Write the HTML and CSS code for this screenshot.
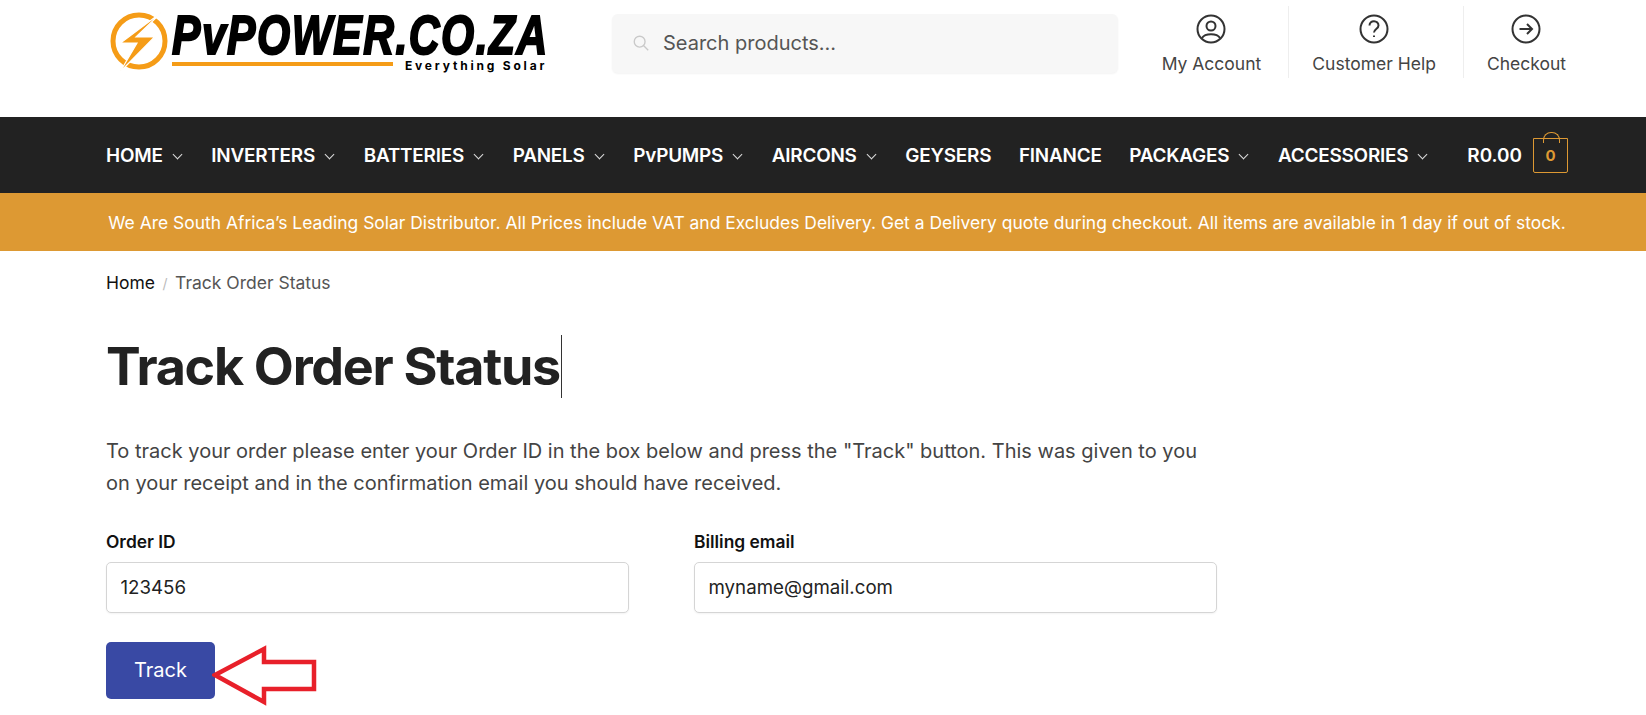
FILE: index.html
```html
<!DOCTYPE html>
<html>

<head>
    <meta charset="utf-8">
    <title>Track Order Status</title>
    <link rel="stylesheet" href="styles.css">
</head>

<body>
    <header class="masthead">
        <div class="logo">
            <svg class="logo-mark" viewBox="0 0 60 66" width="60" height="66">
                <circle cx="30" cy="32" r="26" fill="none" stroke="#f59c17" stroke-width="5" />
                <path d="M53 3 L11.5 34 L28 34 L11 63 L45.5 28 L27 28 Z" fill="#f59c17" stroke="#fff" stroke-width="1.2" />
            </svg>
            <div class="logo-text">
                <div class="logo-name">PvPOWER.CO.ZA</div>
                <div class="logo-sub">
                    <span class="logo-line"></span>
                    <span class="logo-tag">Everything Solar</span>
                </div>
            </div>
        </div>
        <div class="search">
            <svg class="search-icon" viewBox="0 0 20 20" width="18" height="18">
                <circle cx="8.5" cy="8.5" r="6" fill="none" stroke="#c9c9c9" stroke-width="1.5" />
                <path d="M13 13 L18 18" stroke="#c9c9c9" stroke-width="1.5" />
            </svg>
            <span>Search products...</span>
        </div>
        <nav class="secondary">
            <a class="secondary-item">
                <svg viewBox="0 0 30 30" width="30" height="30" fill="none" stroke="#333" stroke-width="2">
                    <circle cx="15" cy="15" r="13.5" />
                    <circle cx="15" cy="12" r="4.5" />
                    <path d="M6 24 C9 19 21 19 24 24" />
                </svg>
                <span>My Account</span>
            </a>
            <a class="secondary-item">
                <svg viewBox="0 0 30 30" width="30" height="30" fill="none" stroke="#333" stroke-width="2">
                    <circle cx="15" cy="15" r="13.5" />
                    <path d="M10.5 11.5 C10.5 5.5 19.5 6 19.5 11.5 C19.5 15 15 15 15 18.5" />
                    <path d="M15 21.5 L15 23" />
                </svg>
                <span>Customer Help</span>
            </a>
            <a class="secondary-item">
                <svg viewBox="0 0 30 30" width="30" height="30" fill="none" stroke="#333" stroke-width="2">
                    <circle cx="15" cy="15" r="13.5" />
                    <path d="M8.5 15 L21 15 M16 10 L21 15 L16 20" />
                </svg>
                <span>Checkout</span>
            </a>
        </nav>
    </header>

    <div class="navbar">
        <ul class="menu">
            <li class="has-sub">HOME</li>
            <li class="has-sub">INVERTERS</li>
            <li class="has-sub">BATTERIES</li>
            <li class="has-sub">PANELS</li>
            <li class="has-sub">PvPUMPS</li>
            <li class="has-sub">AIRCONS</li>
            <li>GEYSERS</li>
            <li>FINANCE</li>
            <li class="has-sub">PACKAGES</li>
            <li class="has-sub">ACCESSORIES</li>
        </ul>
        <div class="cart">
            <span>R0.00</span>
            <div class="bag"><span>0</span></div>
        </div>
    </div>

    <div class="notice">We Are South Africa’s Leading Solar Distributor. All Prices include VAT and Excludes Delivery. Get a Delivery quote during checkout. All items are available in 1 day if out of stock.</div>

    <main class="content">
        <div class="breadcrumb"><a>Home</a><span class="sep">/</span>Track Order Status</div>
        <h1 class="title"><span class="title-text">Track Order Status</span></h1>
        <p class="intro">To track your order please enter your Order ID in the box below and press the "Track" button. This was given to you on your receipt and in the confirmation email you should have received.</p>
        <form class="track-form">
            <div class="fields">
                <label class="field">
                    <span class="field-label">Order ID</span>
                    <input class="field-input" type="text" value="123456">
                </label>
                <label class="field">
                    <span class="field-label">Billing email</span>
                    <input class="field-input" type="text" value="myname@gmail.com">
                </label>
            </div>
            <div class="submit-row">
                <button class="track-btn" type="button">Track</button>
                <svg class="arrow" viewBox="0 0 106 62" width="106" height="62">
                    <path d="M3 30 L52 4 L52 17 L102 17 L102 44 L52 44 L52 57 Z" fill="#fff" stroke="#e8202a" stroke-width="4.5" />
                </svg>
            </div>
        </form>
    </main>
</body>

</html>
```

FILE: styles.css
```css
* {
    box-sizing: border-box;
}

html,
body {
    margin: 0;
    padding: 0;
    height: 100%;
    overflow: hidden;
}

body {
    font-family: Inter, "Liberation Sans", sans-serif;
    color: #444;
    background: #fff;
}

.masthead {
    height: 117px;
    padding: 6px 80px 0 106px;
    display: flex;
    align-items: flex-start;
}

.logo {
    width: 506px;
    display: flex;
    align-items: flex-start;
    color: #000;
}

.logo-mark {
    margin: 3px 0 0 3px;
    flex: none;
}

.logo-text {
    width: 376px;
    margin: 7px 0 0 3px;
}

.logo-name {
    font-family: "Liberation Sans", sans-serif;
    font-size: 56px;
    line-height: 44px;
    font-weight: 700;
    font-style: italic;
    letter-spacing: 2px;
    -webkit-text-stroke: 2.2px #000;
    white-space: nowrap;
    transform: scaleX(0.76);
    transform-origin: left center;
}

.logo-sub {
    display: flex;
    align-items: flex-start;
    height: 16px;
    margin-top: 3px;
}

.logo-line {
    width: 221px;
    height: 4px;
    margin: 2px 12px 0 0;
    background: #f59c17;
}

.logo-tag {
    font-size: 12px;
    line-height: 12px;
    font-weight: 700;
    letter-spacing: 2.8px;
    white-space: nowrap;
}

.search {
    width: 506px;
    height: 59px;
    margin-top: 8px;
    padding: 0 0 2px 20px;
    display: flex;
    align-items: center;
    gap: 13px;
    font-size: 20px;
    color: #555;
    background: #f7f7f7;
    border-radius: 6px;
    box-shadow: 0 1px 2px rgba(0, 0, 0, 0.05);
}

.search-icon {
    flex: none;
}

.secondary {
    display: flex;
    margin-left: auto;
}

.secondary-item {
    height: 72px;
    padding: 8px 27px 0 23px;
    display: flex;
    flex-direction: column;
    align-items: center;
    gap: 9px;
    font-size: 17.5px;
    line-height: 22px;
    color: #444;
    border-left: 1px solid #eee;
}

.secondary-item:first-child {
    border-left: 0;
}

.secondary-item svg {
    display: block;
}

.secondary-item:last-child {
    padding-right: 0;
}

.navbar {
    height: 76px;
    padding: 0 78px 0 106px;
    display: flex;
    align-items: center;
    justify-content: space-between;
    background: #222;
    color: #fff;
}

.menu {
    display: flex;
    gap: 27.6px;
    margin: 0;
    padding: 0;
    list-style: none;
    font-size: 18.9px;
    font-weight: 600;
    letter-spacing: -0.2px;
}

.menu .has-sub::after {
    content: "";
    display: inline-block;
    width: 6px;
    height: 6px;
    margin: 0 3px 4px 11px;
    border-right: 1px solid #ddd;
    border-bottom: 1px solid #ddd;
    transform: rotate(45deg);
}

.cart {
    display: flex;
    align-items: center;
    gap: 11px;
    font-size: 18.9px;
    font-weight: 600;
}

.bag {
    position: relative;
    width: 35px;
    height: 35px;
    margin-top: 1px;
    display: flex;
    align-items: center;
    justify-content: center;
    border: 1px solid #dd9933;
    border-radius: 0 0 2px 2px;
    color: #dd9933;
    font-size: 15px;
    font-weight: 700;
}

.bag::before {
    content: "";
    position: absolute;
    left: 9px;
    top: -7px;
    width: 15px;
    height: 10px;
    border: 1px solid #dd9933;
    border-bottom: 0;
    border-radius: 8px 8px 0 0;
}

.notice {
    height: 58px;
    padding-left: 28px;
    display: flex;
    align-items: center;
    justify-content: center;
    background: #dd9933;
    color: #fff;
    font-size: 17.44px;
    white-space: nowrap;
}

.content {
    padding: 20px 0 0 106px;
    width: 1218px;
}

.breadcrumb {
    font-size: 17.5px;
    line-height: 24px;
    color: #555;
}

.breadcrumb a {
    color: #111;
}

.sep {
    margin: 0 7.5px;
    color: #bbb;
    font-size: 14px;
}

.title {
    margin: 39px 0 0;
    font-size: 52px;
    line-height: 64px;
    font-weight: 650;
    letter-spacing: -1.27px;
    color: #222;
}

.title-text {
    padding-right: 1px;
    border-right: 1px solid #333;
}

.intro {
    margin: 36px 0 0;
    font-size: 20px;
    line-height: 32px;
    color: #444;
}

.fields {
    display: grid;
    grid-template-columns: 523px 523px;
    gap: 65px;
    margin-top: 31px;
}

.field {
    display: block;
}

.field-label {
    display: block;
    font-size: 17.4px;
    line-height: 24px;
    font-weight: 600;
    color: #111;
}

.field-input {
    display: block;
    width: 100%;
    height: 51px;
    margin-top: 8px;
    padding: 0 13.5px;
    font-family: Inter, sans-serif;
    font-size: 18.7px;
    color: #222;
    background: #fff;
    border: 1px solid #d5d5d5;
    border-radius: 5px;
    box-shadow: 0 1px 2px rgba(0, 0, 0, 0.05);
}

.submit-row {
    display: flex;
    align-items: flex-start;
    margin-top: 29px;
}

.track-btn {
    width: 109px;
    height: 57px;
    padding-bottom: 2px;
    font-family: Inter, sans-serif;
    font-size: 20px;
    font-weight: 400;
    color: #fff;
    background: #3949a4;
    border: 0;
    border-radius: 5px;
}

.arrow {
    margin: 3px 0 0 -3px;
}
```
